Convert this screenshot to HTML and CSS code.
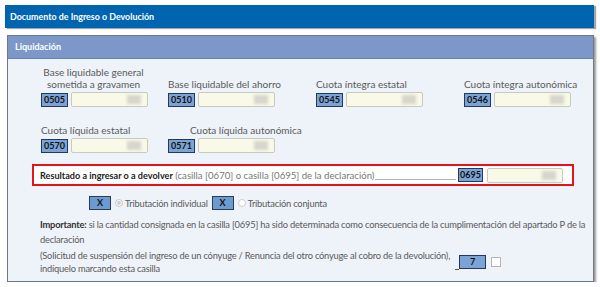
FILE: index.html
```html
<!DOCTYPE html>
<html>
<head>
    <link rel="stylesheet" href="styles.css">
</head>
<body>
    <div class="page">
        <div class="doc-header">Documento de Ingreso o Devolución</div>

        <div class="section">
            <div class="section-title">Liquidación</div>
            <div class="section-body">

                <div class="field-grid">
                    <div class="field">
                        <span class="field-label label-center">Base liquidable general<br>sometida a gravamen</span>
                        <div class="field-row"><span class="code">0505</span><span class="amount"><span class="blur"></span></span></div>
                    </div>
                    <div class="field">
                        <span class="field-label">Base liquidable del ahorro</span>
                        <div class="field-row"><span class="code">0510</span><span class="amount"><span class="blur"></span></span></div>
                    </div>
                    <div class="field">
                        <span class="field-label">Cuota íntegra estatal</span>
                        <div class="field-row"><span class="code">0545</span><span class="amount"><span class="blur"></span></span></div>
                    </div>
                    <div class="field">
                        <span class="field-label">Cuota íntegra autonómica</span>
                        <div class="field-row"><span class="code">0546</span><span class="amount"><span class="blur"></span></span></div>
                    </div>
                </div>

                <div class="field-grid row-two">
                    <div class="field">
                        <span class="field-label">Cuota líquida estatal</span>
                        <div class="field-row"><span class="code">0570</span><span class="amount"><span class="blur"></span></span></div>
                    </div>
                    <div class="field">
                        <span class="field-label label-shift">Cuota líquida autonómica</span>
                        <div class="field-row"><span class="code">0571</span><span class="amount"><span class="blur"></span></span></div>
                    </div>
                </div>

                <div class="result-box">
                    <span class="result-label"><b>Resultado a ingresar o a devolver</b> (casilla [0670] o casilla [0695] de la declaración)</span>
                    <span class="leader"></span>
                    <span class="code code-result">0695</span>
                    <span class="amount"><span class="blur"></span></span>
                </div>

                <div class="tributacion">
                    <span class="x-btn">X</span>
                    <span class="radio radio-on"></span>
                    <span class="radio-text">Tributación individual</span>
                    <span class="x-btn">X</span>
                    <span class="radio"></span>
                    <span class="radio-text">Tributación conjunta</span>
                </div>

                <p class="note"><b>Importante:</b> si la cantidad consignada en la casilla [0695] ha sido determinada como consecuencia de la cumplimentación del apartado P de la declaración</p>

                <div class="suspension">
                    <p class="suspension-text">(Solicitud de suspensión del ingreso de un cónyuge / Renuncia del otro cónyuge al cobro de la devolución),<br>indíquelo marcando esta casilla</p>
                    <span class="tick"></span>
                    <span class="code code-seven">7</span>
                    <span class="checkbox"></span>
                </div>

            </div>
        </div>
    </div>
</body>
</html>
```

FILE: styles.css
```css
body {
    margin: 0;
    background-color: white;
    font-family: Lato, "Liberation Sans", sans-serif;
    font-size: 10px;
    color: #5a5a5a;
}

.page {
    padding: 5px 0 0 5px;
    width: 589px;
}

.doc-header {
    height: 23px;
    line-height: 23px;
    padding-left: 5px;
    background-color: #0065b0;
    color: white;
    font-weight: bold;
    font-size: 8.9px;
    box-shadow: 2px 1px 1px rgba(0, 0, 0, 0.35);
}

.section {
    margin: 7px 0 0 2px;
    width: 585px;
    height: 245px;
    border: 1px solid #6f7884;
    background-color: #eef2f9;
    box-shadow: 2px 2px 2px rgba(0, 0, 0, 0.4);
}

.section-title {
    height: 22px;
    line-height: 22px;
    padding-left: 7px;
    background-color: #7b98c9;
    border-bottom: 1px solid #6482b3;
    color: white;
    font-weight: bold;
    font-size: 9px;
}

.section-body {
    padding: 7px 0 0 24px;
}

.field-grid {
    display: grid;
    grid-template-columns: 127px 148px 148px 148px;
    align-items: end;
    margin-left: 9px;
}

.row-two {
    margin-top: 17px;
}

.field {
    display: flex;
    flex-direction: column;
}

.field-label {
    line-height: 12px;
    margin-bottom: 2px;
}

.label-center {
    width: 105px;
    text-align: center;
}

.label-shift {
    padding-left: 22px;
}

.field-row {
    display: flex;
    align-items: center;
    gap: 3px;
}

.code {
    height: 12px;
    line-height: 12px;
    padding: 0 2px;
    background-color: #7ca3d6;
    border: 1px solid #22385c;
    color: #111;
    font-weight: bold;
    font-size: 9px;
}

.amount {
    box-sizing: border-box;
    width: 77px;
    height: 15px;
    padding-right: 6px;
    display: flex;
    justify-content: flex-end;
    align-items: center;
    background-color: #f9f9e8;
    border: 1px solid #c9c9bd;
    border-radius: 2px;
}

.blur {
    width: 14px;
    height: 9px;
    background-color: #d6d6cc;
    filter: blur(1.5px);
}

.result-box {
    box-sizing: border-box;
    width: 542px;
    height: 22px;
    margin-top: 11px;
    padding: 0 9px 0 6px;
    display: flex;
    align-items: center;
    background-color: white;
    border: 2px solid #e3141b;
}

.result-label {
    color: #777;
    font-size: 9.6px;
    white-space: nowrap;
}

.result-label b {
    color: #222;
    font-size: 9.1px;
}

.leader {
    flex: 1;
    align-self: flex-end;
    margin: 0 2px 4px 1px;
    border-bottom: 1px solid #b5b5b5;
}

.code-result {
    padding: 0 1px;
}

.result-box .amount {
    width: 76px;
    margin-left: 4px;
}

.tributacion {
    display: flex;
    align-items: center;
    margin: 10px 0 0 57px;
}

.x-btn {
    width: 20px;
    height: 12px;
    line-height: 12px;
    text-align: center;
    background-color: #6c9bd2;
    border: 1px solid #2c3c55;
    color: #111;
    font-weight: bold;
    font-size: 9px;
}

.radio {
    box-sizing: border-box;
    width: 8px;
    height: 8px;
    margin: 0 2px 0 4px;
    border-radius: 50%;
    border: 1px solid #cfcfcf;
    background-color: white;
}

.radio-on {
    background-color: #cfcfcf;
    box-shadow: inset 0 0 0 1px white;
}

.radio-text {
    margin-right: 4px;
    font-size: 9.3px;
    letter-spacing: -0.2px;
}

.note {
    margin: 7px 0 0 8px;
    width: 550px;
    line-height: 15px;
    font-size: 9.3px;
    letter-spacing: -0.2px;
}

.note b {
    color: #333;
}

.suspension {
    display: flex;
    align-items: center;
    margin: 2px 0 0 8px;
}

.suspension-text {
    margin: 0;
    white-space: nowrap;
    line-height: 13px;
    font-size: 9.3px;
    letter-spacing: -0.2px;
}

.tick {
    width: 4px;
    margin: 14px 0 0 5px;
    border-bottom: 1px solid #555;
}

.code-seven {
    width: 21px;
    text-align: center;
}

.checkbox {
    width: 8px;
    height: 8px;
    margin-left: 5px;
    background-color: white;
    border: 1px solid #b5b5b5;
}
```
